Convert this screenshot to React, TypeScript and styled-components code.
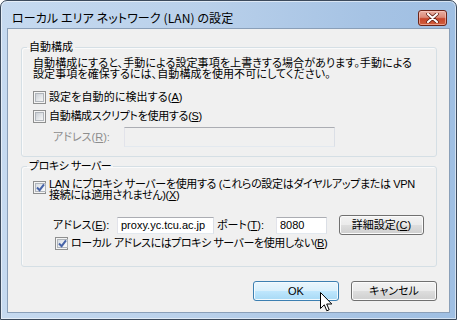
import React from 'react';
import styled, { createGlobalStyle, css } from 'styled-components';

const FONT = `"Liberation Sans", "Noto Sans CJK JP", sans-serif`;
const TITLE_FONT = `"Noto Sans CJK JP", "Noto Sans", sans-serif`;

const Global = createGlobalStyle`
  html, body { margin: 0; padding: 0; background: #ffffff; }
  body { width: 457px; height: 320px; overflow: hidden; font-family: ${FONT}; }
  * { box-sizing: border-box; }
`;

const Window = styled.div`
  position: relative;
  width: 457px;
  height: 320px;
  border: 1px solid #3c4a5c;
  border-radius: 7px 7px 0 0;
  background: linear-gradient(to right, #c6daf0 0%, #b9d0ea 45%, #a6c3e4 80%, #9fbfe3 100%);
  box-shadow: inset 0 0 0 1px rgba(255, 255, 255, 0.55);
  display: flex;
  flex-direction: column;
  font-family: ${FONT};
  font-feature-settings: "palt";
`;

const TitleBar = styled.div`
  height: 27px;
  display: flex;
  align-items: flex-start;
  justify-content: space-between;
  padding: 0 9px 0 11px;
`;

const TitleText = styled.div`
  font-family: ${TITLE_FONT};
  font-size: 12px;
  line-height: 14px;
  padding-top: 10px;
  color: #000;
  letter-spacing: 0.1px;
`;

const CloseButton = styled.div`
  margin-top: 9px;
  width: 29px;
  height: 16px;
  border: 1px solid #6b2418;
  border-radius: 3px;
  background: linear-gradient(#e9b0a4 0%, #dc8a78 45%, #c8462b 55%, #d0603f 100%);
  box-shadow: inset 0 0 0 1px rgba(255, 210, 200, 0.55);
  display: flex;
  align-items: center;
  justify-content: center;
`;

const Client = styled.div`
  flex: 1;
  margin: 0 6px 6px 6px;
  border: 1px solid #8a9fb8;
  background: #f0f0f0;
  padding: 11px 12px 0 13px;
  display: flex;
  flex-direction: column;
`;

const GroupBox = styled.fieldset<{ $gap?: number }>`
  margin: ${(p) => p.$gap ?? 0}px 0 0 0;
  padding: 0;
  min-inline-size: 0;
  border: 1px solid #d5dfe5;
  border-radius: 3px;
  box-shadow: inset 1px 1px 0 #fafafa;
`;

const Legend = styled.legend<{ $ls?: number }>`
  margin-left: 5px;
  padding: 0 2px;
  font-size: 11px;
  line-height: 14px;
  letter-spacing: ${(p) => p.$ls ?? 0}px;
  color: #000;
`;

const GroupBody = styled.div<{ $pt: number; $pb: number }>`
  padding: ${(p) => p.$pt}px 8px ${(p) => p.$pb}px 11px;
  display: flex;
  flex-direction: column;
`;

const Text = styled.div`
  font-size: 11px;
  line-height: 11px;
  letter-spacing: 0.1px;
  color: #000;
  white-space: nowrap;
`;

const CheckRow = styled.label<{ $mt: number; $indent?: number }>`
  display: flex;
  align-items: flex-start;
  gap: 3px;
  margin-top: ${(p) => p.$mt}px;
  margin-left: ${(p) => p.$indent ?? 0}px;
  font-size: 11px;
  line-height: 11px;
  color: #000;
  white-space: nowrap;
`;

const CheckLabel = styled.span<{ $pt?: number; $ls?: number }>`
  padding-top: ${(p) => p.$pt ?? 1}px;
  letter-spacing: ${(p) => p.$ls ?? 0.1}px;
`;

const Box = styled.span<{ $mt?: number }>`
  flex: none;
  width: 13px;
  height: 13px;
  margin-top: ${(p) => p.$mt ?? 0}px;
  border: 1px solid #8e8f8f;
  background: #f4f4f4;
  padding: 1px;
  display: flex;
`;

const BoxInner = styled.span<{ $checked: boolean }>`
  flex: 1;
  border: 1px solid #b0b5bb;
  display: flex;
  align-items: center;
  justify-content: center;
  ${(p) =>
    p.$checked
      ? css`background: linear-gradient(135deg, #d8dde3 0%, #eef0f3 60%, #fbfbfb 100%);`
      : css`background: linear-gradient(135deg, #cbcfd5 0%, #e3e6e9 55%, #f6f6f6 100%);`}
`;

const FieldRow = styled.div<{ $mt: number; $indent: number }>`
  display: flex;
  align-items: center;
  margin-top: ${(p) => p.$mt}px;
  margin-left: ${(p) => p.$indent}px;
  font-size: 11px;
  line-height: 13px;
  white-space: nowrap;
`;

const FieldLabel = styled.span<{ $w: number; $disabled?: boolean; $ml?: number }>`
  flex: none;
  width: ${(p) => p.$w}px;
  margin-left: ${(p) => p.$ml ?? 0}px;
  color: ${(p) => (p.$disabled ? '#8d8d8d' : '#000')};
`;

const TextBox = styled.div<{ $w: number; $h: number; $disabled?: boolean }>`
  flex: none;
  width: ${(p) => p.$w}px;
  height: ${(p) => p.$h}px;
  border: 1px solid;
  border-color: #abadb3 #dbdfe6 #e3e9ef #e2e3ea;
  background: ${(p) => (p.$disabled ? '#f0f0f0' : '#ffffff')};
  font-size: 11px;
  line-height: 14px;
  padding: 0 3px;
  color: #000;
  display: flex;
  align-items: center;
  overflow: hidden;
`;

const PushButton = styled.div<{ $w: number; $hot?: boolean; $ml?: number }>`
  flex: none;
  width: ${(p) => p.$w}px;
  height: 20px;
  margin-left: ${(p) => p.$ml ?? 0}px;
  border: 1px solid ${(p) => (p.$hot ? '#3c7fb1' : '#707070')};
  border-radius: 3px;
  box-shadow: inset 0 0 0 1px ${(p) => (p.$hot ? '#f2fafe' : '#fbfbfb')};
  background: ${(p) =>
    p.$hot
      ? 'linear-gradient(#eaf6fd 0%, #d9f0fc 48%, #bee6fd 52%, #a7d9f5 100%)'
      : 'linear-gradient(#f2f2f2 0%, #ebebeb 48%, #dddddd 52%, #cfcfcf 100%)'};
  font-size: 11px;
  line-height: 14px;
  color: #000;
  display: flex;
  align-items: center;
  justify-content: center;
`;

const ButtonBar = styled.div`
  display: flex;
  justify-content: flex-end;
  gap: 12px;
  margin-top: 14px;
`;

const Cursor = styled.svg`
  position: absolute;
  left: 319px;
  top: 291px;
`;

const Check = () => (
  <svg width="9" height="9" viewBox="0 0 9 9">
    <path d="M1 4.5 L3.6 7.2 L8 1.4" fill="none" stroke="#4663a8" strokeWidth="2" />
  </svg>
);

const CheckBox = ({ checked, mt }: { checked: boolean; mt?: number }) => (
  <Box $mt={mt}>
    <BoxInner $checked={checked}>{checked ? <Check /> : null}</BoxInner>
  </Box>
);

export default function App() {
  return (
    <>
      <Global />
      <Window>
        <TitleBar>
          <TitleText>ローカル エリア ネットワーク (LAN) の設定</TitleText>
          <CloseButton>
            <svg width="13" height="10" viewBox="0 0 13 10">
              <path d="M2 1 L11 9 M11 1 L2 9" stroke="#5a1a10" strokeWidth="3.6" strokeLinecap="round" />
              <path d="M2 1 L11 9 M11 1 L2 9" stroke="#ffffff" strokeWidth="2.2" strokeLinecap="round" />
            </svg>
          </CloseButton>
        </TitleBar>
        <Client>
          <GroupBox>
            <Legend>自動構成</Legend>
            <GroupBody $pt={4} $pb={9}>
              <Text>
                自動構成にすると、手動による設定事項を上書きする場合があります。手動による
                <br />
                設定事項を確保するには、自動構成を使用不可にしてください。
              </Text>
              <CheckRow $mt={11}>
                <CheckBox checked={false} />
                <CheckLabel>
                  設定を自動的に検出する(<u>A</u>)
                </CheckLabel>
              </CheckRow>
              <CheckRow $mt={6}>
                <CheckBox checked={false} />
                <CheckLabel $ls={-0.3}>
                  自動構成スクリプトを使用する(<u>S</u>)
                </CheckLabel>
              </CheckRow>
              <FieldRow $mt={4} $indent={20}>
                <FieldLabel $w={71} $disabled>
                  アドレス(<u>R</u>):
                </FieldLabel>
                <TextBox $w={211} $h={20} $disabled />
              </FieldRow>
            </GroupBody>
          </GroupBox>
          <GroupBox $gap={2}>
            <Legend $ls={-0.5}>プロキシ&nbsp;サーバー</Legend>
            <GroupBody $pt={6} $pb={16}>
              <CheckRow $mt={0}>
                <CheckBox checked mt={2} />
                <CheckLabel $pt={0} $ls={-0.35}>
                  LAN にプロキシ サーバーを使用する (これらの設定はダイヤルアップまたは VPN
                  <br />
                  接続には適用されません)(<u>X</u>)
                </CheckLabel>
              </CheckRow>
              <FieldRow $mt={14} $indent={20}>
                <FieldLabel $w={64}>
                  アドレス(<u>E</u>):
                </FieldLabel>
                <TextBox $w={97} $h={17}>proxy.yc.tcu.ac.jp</TextBox>
                <FieldLabel $w={59} $ml={3}>
                  ポート(<u>T</u>):
                </FieldLabel>
                <TextBox $w={51} $h={17}>8080</TextBox>
                <PushButton $w={85} $ml={12}>
                  詳細設定(<u>C</u>)
                </PushButton>
              </FieldRow>
              <CheckRow $mt={2} $indent={22}>
                <CheckBox checked />
                <CheckLabel $ls={-0.45}>
                  ローカル アドレスにはプロキシ サーバーを使用しない(<u>B</u>)
                </CheckLabel>
              </CheckRow>
            </GroupBody>
          </GroupBox>
          <ButtonBar>
            <PushButton $w={86} $hot>
              OK
            </PushButton>
            <PushButton $w={86}>キャンセル</PushButton>
          </ButtonBar>
        </Client>
        <Cursor width="13" height="20" viewBox="0 0 13 20">
          <path
            d="M0.5 0.5 L0.5 16.5 L4.3 12.8 L6.8 18.8 L9.2 17.8 L6.7 12 L11.8 12 Z"
            fill="#ffffff"
            stroke="#000000"
            strokeWidth="1"
            strokeLinejoin="miter"
          />
        </Cursor>
      </Window>
    </>
  );
}
